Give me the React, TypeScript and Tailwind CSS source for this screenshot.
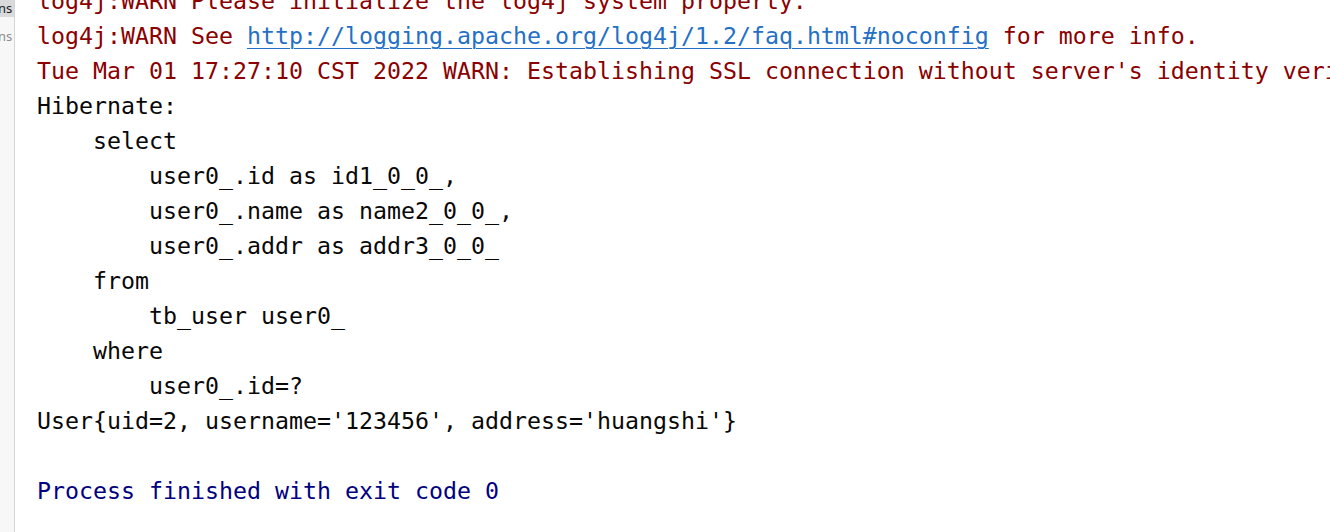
const lines: { text: string; tone: "warn" | "plain" | "exit" | "link" }[] = [
  { text: "log4j:WARN Please initialize the log4j system property.", tone: "warn" },
  { text: "", tone: "link" },
  { text: "Tue Mar 01 17:27:10 CST 2022 WARN: Establishing SSL connection without server's identity verification is not recommended.", tone: "warn" },
  { text: "Hibernate: ", tone: "plain" },
  { text: "    select", tone: "plain" },
  { text: "        user0_.id as id1_0_0_,", tone: "plain" },
  { text: "        user0_.name as name2_0_0_,", tone: "plain" },
  { text: "        user0_.addr as addr3_0_0_ ", tone: "plain" },
  { text: "    from", tone: "plain" },
  { text: "        tb_user user0_ ", tone: "plain" },
  { text: "    where", tone: "plain" },
  { text: "        user0_.id=?", tone: "plain" },
  { text: "User{uid=2, username='123456', address='huangshi'}", tone: "plain" },
  { text: "", tone: "plain" },
  { text: "Process finished with exit code 0", tone: "exit" },
];

const toneClass = {
  warn: "text-[#8b0000]",
  plain: "text-[#080808]",
  exit: "text-[#00007f]",
  link: "text-[#8b0000]",
};

export default function App() {
  return (
    <div className="flex h-[532px] w-[1330px] overflow-hidden bg-white">
      <div className="w-[15px] shrink-0 border-r border-[#d4d4d4] bg-[#f7f7f7] font-['Noto_Sans',sans-serif] text-[13px] leading-none">
        <div className="flex h-[17px] items-center overflow-hidden bg-[#dadada] text-[#1a1a1a]">
          <span className="-ml-[2px]">ns</span>
        </div>
        <div className="mt-[13px] overflow-hidden text-[#8c8c8c]">
          <span className="-ml-[2px]">ns</span>
        </div>
      </div>
      <div className="-mt-[17px] min-w-0 flex-1 pl-[22px] font-['DejaVu_Sans_Mono',monospace] text-[23.25px] leading-[35px]">
        {lines.map((line, i) =>
          line.tone === "link" ? (
            <div className="h-[35px] whitespace-pre text-[#8b0000]" key={i}>
              log4j:WARN See{" "}
              <span className="text-[#2470c6] underline decoration-1 underline-offset-[4px]">
                http://logging.apache.org/log4j/1.2/faq.html#noconfig
              </span>{" "}
              for more info.
            </div>
          ) : (
            <div className={`h-[35px] whitespace-pre ${toneClass[line.tone]}`} key={i}>
              {line.text}
            </div>
          ),
        )}
      </div>
    </div>
  );
}
